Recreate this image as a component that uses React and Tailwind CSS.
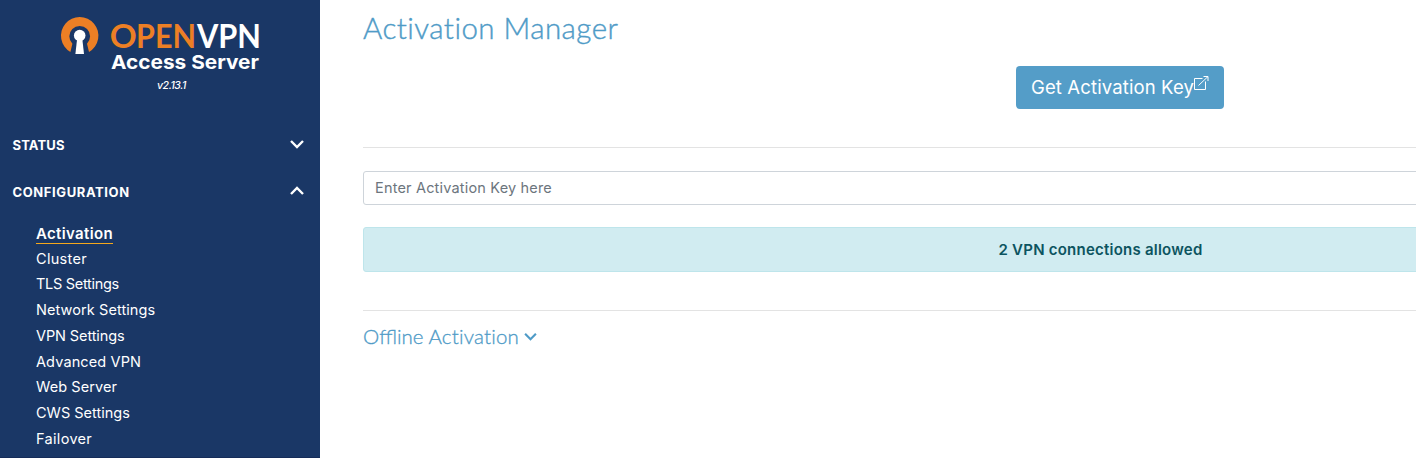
import React from 'react';

const links = [
  ['Cluster', 'tracking-[0.3px]'],
  ['TLS Settings', 'tracking-[-0.29px]'],
  ['Network Settings', 'tracking-[0.08px]'],
  ['VPN Settings', 'tracking-[-0.1px]'],
  ['Advanced VPN', 'tracking-[0.12px]'],
  ['Web Server', 'tracking-[0.1px]'],
  ['CWS Settings', 'tracking-[0.01px]'],
  ['Failover', 'tracking-[0.32px]'],
];

function Chevron({ up, className }) {
  return (
    <svg viewBox="0 0 14 10" className={className} fill="none" stroke="currentColor" strokeWidth="2.4">
      <path d={up ? 'M1 8 L7 2 L13 8' : 'M1 2 L7 8 L13 2'} />
    </svg>
  );
}

function Logo() {
  return (
    <svg viewBox="50 5 220 70" className="h-[70px] w-[220px]">
      <path d="M70.4 51.9 A18.7 18.7 0 1 1 89 51.9 L87 43.7 A10.4 10.4 0 1 0 72.4 43.7 Z" fill="#ec7f25" />
      <circle cx="79.7" cy="35.5" r="5.8" fill="#fff" />
      <path d="M77.2 38 H82.2 L84 54 H75.4 Z" fill="#fff" />
      <g className="font-['Lato',sans-serif] font-bold" fontSize="33">
        <text x="109.8" y="47.7" textLength="27" lengthAdjust="spacingAndGlyphs" fill="#ec7f25">O</text>
        <text x="136" y="47.7" textLength="60" lengthAdjust="spacingAndGlyphs" fill="#ec7f25">PEN</text>
        <text x="197" y="47.7" textLength="64" lengthAdjust="spacingAndGlyphs" fill="#fff">VPN</text>
      </g>
      <text x="111" y="69.4" textLength="148" lengthAdjust="spacingAndGlyphs" fontSize="19" fill="#fff" className="font-['Inter',sans-serif] font-bold">Access Server</text>
    </svg>
  );
}

export default function App() {
  return (
    <div className="flex h-[458px] overflow-hidden bg-white font-['Inter',sans-serif]">
      <aside className="flex w-80 shrink-0 flex-col border-b border-[#152c59] bg-[#1a3766] text-white">
        <header className="flex flex-col items-center pt-[5px]">
          <Logo />
          <p className="ml-[23px] mt-[3px] text-[10.5px] leading-4 font-medium italic tracking-[-0.45px]">v2.13.1</p>
        </header>
        <div className="mt-10 flex h-6 items-center justify-between pr-4 pl-[12.5px] text-[13px] font-bold">
          <span className="tracking-[0.14px]">STATUS</span>
          <Chevron className="mb-1 h-2.5 w-3.5" />
        </div>
        <div className="mt-[23px] flex h-6 items-center justify-between pr-4 pl-[12.5px] text-[13px] font-bold">
          <span className="tracking-[0.6px]">CONFIGURATION</span>
          <Chevron up className="mb-1 h-2.5 w-3.5" />
        </div>
        <nav className="mt-4 flex flex-col items-start pl-9 text-[14.5px]">
          <a className="mb-[1.5px] h-[23px] border-b border-[#f5a81c] text-[15px] font-semibold leading-[25px] tracking-[0.35px]">Activation</a>
          {links.map(([label, tracking]) => (
            <a key={label} className={`h-[25.75px] leading-[26px] ${tracking}`}>{label}</a>
          ))}
        </nav>
      </aside>
      <main className="min-w-0 flex-1 pl-[43px]">
        <div className="w-[1514px]">
          <h1 className="h-[66px] pt-2.5 font-['Lato',sans-serif] text-[29.5px] leading-9 font-light tracking-[0.45px] text-[#4f9bc7] [-webkit-text-stroke:0.4px_#4f9bc7]">Activation Manager</h1>
          <div className="flex justify-center">
            <button className="flex h-[43px] w-52 items-center rounded bg-[#549dc8] pl-[15px] text-[18.5px] text-white">
              <span className="tracking-[0.13px]">Get Activation Key</span>
              <svg viewBox="0 0 16 16" className="-ml-px mb-2.5 h-4 w-4 shrink-0" fill="none" stroke="currentColor" strokeWidth="1">
                <path d="M9.5 3.5 H1.5 V14.5 H12.5 V6.5 M5.5 10.5 L15 1.5 M10.5 1.5 H15 V6" />
              </svg>
            </button>
          </div>
          <div className="mt-[38px] border-t border-[#e3e3e3]" />
          <input
            className="mt-[23px] block h-[34px] w-full rounded-[3px] border border-[#ced4da] pb-0.5 pl-[11px] text-[14.5px] tracking-[0.18px] placeholder-[#6c757d]"
            placeholder="Enter Activation Key here"
          />
          <div className="mt-[22px] flex h-[45px] w-full items-center rounded-[3px] border border-[#bee5eb] bg-[#d1ecf1] pt-0.5 pl-[634.5px] text-[15px] font-semibold tracking-[0.23px] text-[#0c5460]">
            2 VPN connections allowed
          </div>
          <div className="mt-[38px] border-t border-[#e3e3e3]" />
          <h2 className="mt-[11px] flex items-center font-['Lato',sans-serif] text-[20.5px] leading-7 font-light text-[#4f9bc7] [-webkit-text-stroke:0.3px_#4f9bc7]">
            <span>Offline</span>
            <span className="ml-[5px] tracking-[0.2px]">Activation</span>
            <Chevron className="ml-[4.5px] h-[9px] w-[13px]" />
          </h2>
        </div>
      </main>
    </div>
  );
}
